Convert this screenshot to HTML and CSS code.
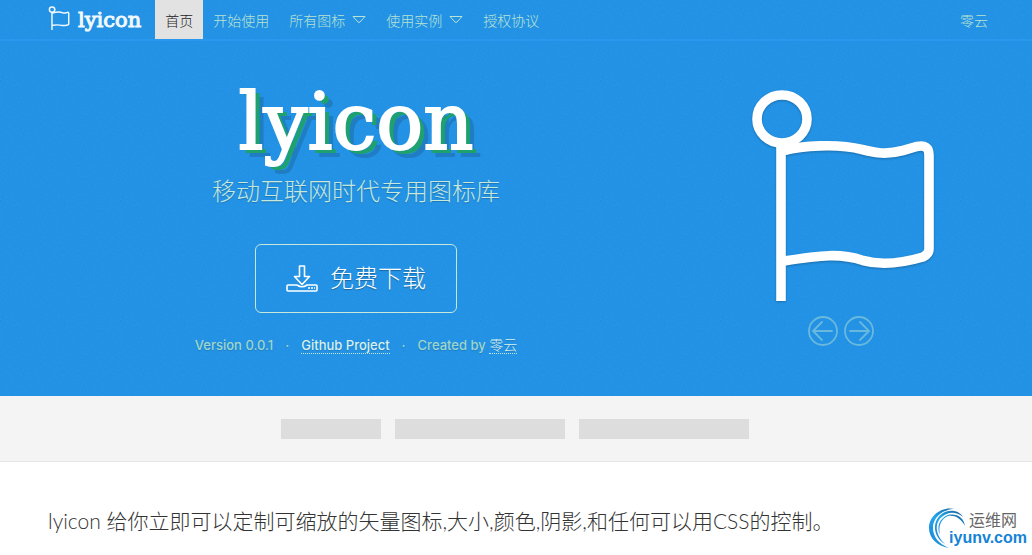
FILE: index.html
```
<!DOCTYPE html>
<html lang="zh-CN">
<head>
    <meta charset="UTF-8">
    <meta name="viewport" content="width=device-width, initial-scale=1.0">
    <title>lyicon</title>
    <link rel="stylesheet" href="styles.css">
</head>
<body>
    <div class="top">
        <nav class="navbar">
            <a class="brand" href="#">
                <svg width="22" height="24" viewBox="0 0 184 212" fill="none" stroke="currentColor" stroke-width="13">
                    <ellipse cx="31" cy="32" rx="24" ry="24"/>
                    <path d="M30 56V212M34 62C52 57 100 50 126 61C144 66 160 58 170 56Q178 56 178 63V160Q178 165 172 167C155 171 135 177 112 171C84 162 60 167 34 171"/>
                </svg>
                <span class="brand-name">lyicon</span>
            </a>
            <ul class="nav">
                <li><a class="active" href="#">首页</a></li>
                <li><a href="#">开始使用</a></li>
                <li><a href="#">所有图标 <svg width="14" height="9" viewBox="0 0 14 9" fill="none" stroke="currentColor"><path d="M1 1.5H13L8 7Q7 8 6 7Z" stroke-linejoin="round"/></svg></a></li>
                <li><a href="#">使用实例 <svg width="14" height="9" viewBox="0 0 14 9" fill="none" stroke="currentColor"><path d="M1 1.5H13L8 7Q7 8 6 7Z" stroke-linejoin="round"/></svg></a></li>
                <li><a href="#">授权协议</a></li>
            </ul>
            <a class="author" href="#">零云</a>
        </nav>

        <header class="hero">
            <div class="intro">
                <h1>lyicon</h1>
                <p class="slogan">移动互联网时代专用图标库</p>
                <a class="download" href="#">
                    <svg width="32" height="28" viewBox="0 0 32 28" fill="none" stroke="currentColor" stroke-width="1.6" stroke-linejoin="round">
                        <path d="M13.5 1H18.5V11.5H23.5L16 19.5L8.5 11.5H13.5Z"/>
                        <path d="M11 20H2Q1 20 1 21V25Q1 26 2 26H30Q31 26 31 25V21Q31 20 30 20H21Q16 23.5 11 20"/>
                        <path d="M22 23H24M25 23H27M28 23H29"/>
                    </svg>
                    <span>免费下载</span>
                </a>
                <ul class="meta">
                    <li>Version 0.0.1</li>
                    <li><a href="#">Github Project</a></li>
                    <li>Created by <a class="creator" href="#">零云</a></li>
                </ul>
            </div>

            <div class="showcase">
                <svg class="flag" width="188" height="212" viewBox="-4 0 188 212" fill="none" stroke="currentColor" stroke-width="9.6">
                    <ellipse cx="31" cy="29" rx="25" ry="24"/>
                    <path d="M30 53V211"/>
                    <path d="M33 60.500C50 56 86 53 111 59.500C125 63 135 65 152 60.500L166 56.500Q178 54 178 65V159Q178 164 172 167C155 172 132 176 112 170.500C90 163 70 165 33 171"/>
                </svg>
                <div class="controls">
                    <button type="button" aria-label="Previous">
                        <svg width="30" height="30" viewBox="0 0 30 30" fill="none" stroke="currentColor" stroke-width="1.8"><circle cx="15" cy="15" r="14"/><path d="M24 15H6M14 6L5 15L14 24" stroke-linecap="round"/></svg>
                    </button>
                    <button type="button" aria-label="Next">
                        <svg width="30" height="30" viewBox="0 0 30 30" fill="none" stroke="currentColor" stroke-width="1.8"><circle cx="15" cy="15" r="14"/><path d="M6 15H24M16 6L25 15L16 24" stroke-linecap="round"/></svg>
                    </button>
                </div>
            </div>
        </header>
    </div>

    <div class="social">
        <div class="social-box small"></div>
        <div class="social-box"></div>
        <div class="social-box"></div>
    </div>

    <main class="content">
        <p class="lead">lyicon 给你立即可以定制可缩放的矢量图标,大小,颜色,阴影,和任何可以用CSS的控制。</p>
    </main>

    <a class="site-mark" href="#">
        <svg width="38" height="41" viewBox="0 0 38 41">
            <defs>
                <linearGradient id="swirl" x1="0" y1="1" x2="1" y2="0">
                    <stop offset="0" stop-color="#1a7fd0"/>
                    <stop offset="0.5" stop-color="#22a8ec"/>
                    <stop offset="1" stop-color="#155a96"/>
                </linearGradient>
            </defs>
            <path fill="url(#swirl)" d="M20 40C8 38 0 30 0 20C0 8 12-2 26 1C14 1 4 9 4 20C4 29 10 36 20 40Z"/>
            <path fill="url(#swirl)" d="M16 36C3 28 3 12 14 5C21 1 30 2 34 9C27 3 19 4 14 8C5 14 6 27 16 36Z"/>
            <path fill="url(#swirl)" d="M11 27C7 18 11 10 19 7C28 5 35 10 36 18C32 10 25 7 19 8C12 11 9 18 11 27Z"/>
        </svg>
        <span class="site-name">
            <span class="site-cn">运维网</span>
            <span class="site-url">iyunv.com</span>
        </span>
    </a>
</body>
</html>
```
FILE: styles.css
```
* {
    box-sizing: border-box;
}

body {
    margin: 0;
    background-color: #fff;
    color: #333;
    font-family: Inter, "Noto Sans CJK SC", sans-serif;
    font-size: 14px;
}

a {
    color: inherit;
    text-decoration: none;
}

ul {
    margin: 0;
    padding: 0;
    list-style: none;
}

svg {
    display: block;
}

.top {
    background-color: #2694e8;
    background-image: url("data:image/svg+xml,%3Csvg xmlns='http://www.w3.org/2000/svg' width='120' height='120'%3E%3Cfilter id='n'%3E%3CfeTurbulence type='fractalNoise' baseFrequency='.6' numOctaves='2' stitchTiles='stitch'/%3E%3CfeColorMatrix values='0 0 0 0 0 0 0 0 0 0.2 0 0 0 0 0.5 0.25 0 0 0 -0.05'/%3E%3C/filter%3E%3Crect width='120' height='120' filter='url(%23n)'/%3E%3C/svg%3E");
    color: #b9e3d3;
}

.navbar {
    display: flex;
    align-items: center;
    height: 41px;
    padding: 0 44px 0 48px;
    border-bottom: 2px solid #2998ef;
    font-weight: 300;
}

.brand {
    display: flex;
    align-items: center;
    gap: 8px;
    margin-right: 14px;
    color: #f1f9fc;
}

.brand svg {
    margin-bottom: 4px;
}

.brand-name {
    font-family: "DejaVu Serif", serif;
    font-size: 21px;
    font-weight: 400;
    line-height: 40px;
    -webkit-text-stroke: 1px #f1f9fc;
}

.nav {
    display: flex;
    flex: 1;
}

.nav a {
    display: flex;
    align-items: center;
    gap: 7px;
    height: 39px;
    padding: 0 10px;
}

.nav .active {
    background-color: #e2e2e2;
    color: #222;
}

.hero {
    display: grid;
    grid-template-columns: 616fr 286fr;
    gap: 34px;
    padding: 49px 48px 41px;
}

.intro {
    display: flex;
    flex-direction: column;
    align-items: center;
}

h1 {
    margin: 0;
    color: #fff;
    font-family: "DejaVu Serif", serif;
    font-size: 78px;
    font-weight: 400;
    line-height: 64px;
    -webkit-text-stroke: 2px;
    text-shadow: 5px 4px 0 #1fa06f, 9px 8px 0 #207dc4;
}

.slogan {
    margin: 20px 0 34px;
    color: #c5e7dc;
    font-size: 24px;
    font-weight: 300;
    line-height: 36px;
    text-shadow: 0 1px 1px rgba(0, 0, 0, 0.2);
}

.download {
    display: flex;
    align-items: center;
    gap: 12px;
    padding: 16px 30px;
    border: 1px solid #c5e7dc;
    border-radius: 6px;
    color: #fff;
    font-size: 24px;
    font-weight: 300;
    line-height: 35px;
    text-shadow: 0 1px 1px rgba(0, 0, 0, 0.3);
}

.meta {
    display: flex;
    margin-top: 22px;
    color: #9fd6cb;
    font-size: 13px;
    font-weight: 500;
    line-height: 20px;
    text-shadow: 0 1px 1px rgba(0, 0, 0, 0.15);
}

.meta li + li::before {
    content: "·";
    margin: 0 12px;
}

.meta a {
    border-bottom: 1px dotted #c5e7dc;
    color: #d9f0ec;
}

.meta .creator {
    font-size: 14px;
    font-weight: 300;
}

.showcase {
    display: flex;
    flex-direction: column;
    align-items: center;
    gap: 14px;
}

.flag {
    color: #fff;
    filter: drop-shadow(0 1px 1px rgba(0, 0, 0, 0.25));
}

.controls {
    display: flex;
    gap: 6px;
}

.controls button {
    padding: 0;
    border: none;
    background: none;
    color: #69b9dd;
    cursor: pointer;
}

.social {
    display: flex;
    justify-content: center;
    gap: 14px;
    padding: 23px 2px 22px 0;
    border-bottom: 1px solid #e6e6e6;
    background-color: #f4f4f4;
}

.social-box {
    width: 170px;
    height: 20px;
    background-color: #ddd;
}

.social-box.small {
    width: 100px;
}

.content {
    padding: 43px 48px 0;
}

.lead {
    margin: 0;
    font-family: Lato, "Noto Sans CJK SC", sans-serif;
    font-size: 21px;
    font-weight: 300;
    line-height: 32px;
}

.site-mark {
    position: absolute;
    right: 5px;
    bottom: 6px;
    display: flex;
}

.site-name {
    display: flex;
    flex-direction: column;
    margin-left: -18px;
    padding-top: 3px;
    line-height: 18px;
}

.site-cn {
    padding-left: 20px;
    color: #666;
    font-size: 16px;
}

.site-url {
    color: #1583d6;
    font-family: "Liberation Sans", sans-serif;
    font-size: 16px;
    font-weight: bold;
}
```
